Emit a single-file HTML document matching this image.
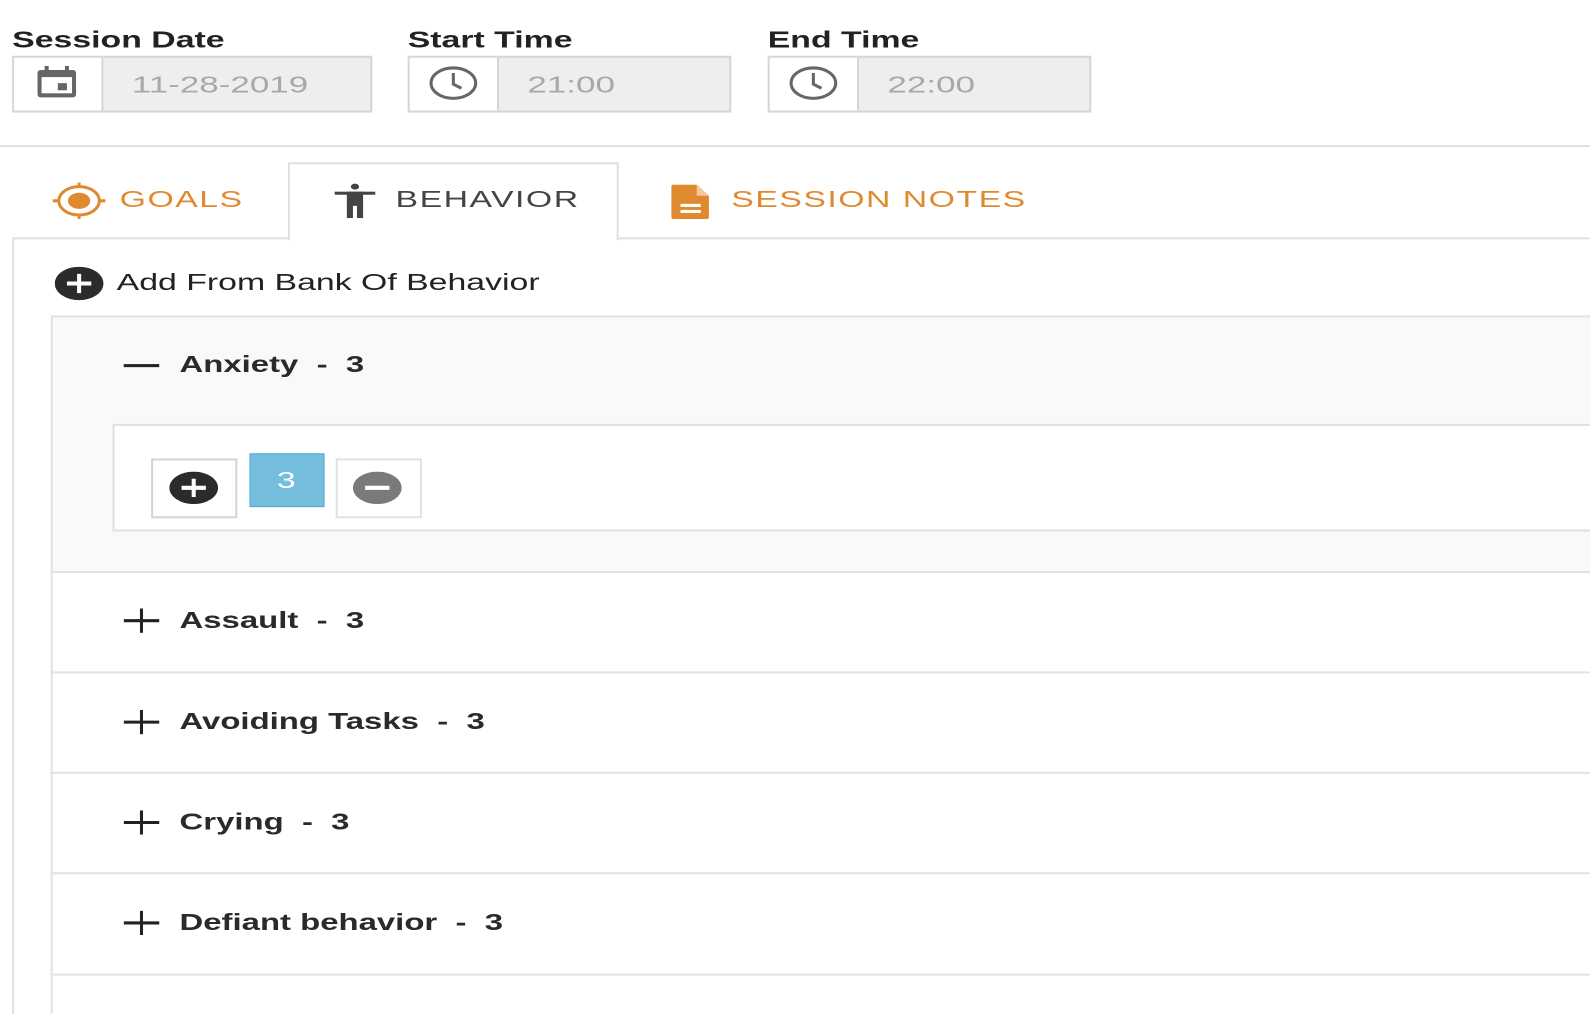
<!DOCTYPE html>
<html><head><meta charset="utf-8"><style>
*{margin:0;padding:0;box-sizing:border-box}
body{width:1590px;height:1000px;overflow:hidden;background:#fff;font-family:"Liberation Sans",Arial,sans-serif;position:relative}
#w{position:absolute;left:0;top:0;width:1568px;height:986px;transform:scale(1.0142);transform-origin:0 0}
.a{position:absolute}
.t{position:absolute;white-space:nowrap;transform:scaleX(1.45);transform-origin:0 50%;line-height:24px;height:24px}
.lbl{font-size:23px;font-weight:bold;color:#222}
.box{position:absolute;border:2px solid #d6d6d6;background:#eee}
.ico{position:absolute;top:0;bottom:0;left:0;background:#fff;border-right:2px solid #d6d6d6}
.val{font-size:23px;color:#a8a8a8;transform:scaleX(1.5)}
.row{position:absolute;left:50px;right:0;border-top:2px solid #e2e2e2}
.name{font-size:23px;font-weight:bold;color:#2a2a2a;transform:scaleX(1.41)}
</style></head><body><div id="w">

<div class="t lbl" style="left:12px;top:27px">Session Date</div>
<div class="box" style="left:12px;top:55px;width:355px;height:56px"><div class="ico" style="width:88px"></div></div>
<svg class="a" style="left:34px;top:64px" width="44" height="34" viewBox="0 0 44 34"><rect x="3" y="5" width="38" height="27" rx="3" fill="#666"/><rect x="7" y="12" width="30" height="16" fill="#fff"/><rect x="10" y="1" width="4" height="7" fill="#666"/><rect x="30" y="1" width="4" height="7" fill="#666"/><rect x="23" y="18" width="9" height="7" fill="#666"/></svg>
<div class="t val" style="left:130px;top:71px">11-28-2019</div>

<div class="t lbl" style="left:402px;top:27px">Start Time</div>
<div class="box" style="left:402px;top:55px;width:319px;height:56px"><div class="ico" style="width:88px"></div></div>
<svg class="a" style="left:422px;top:64px" width="50" height="36" viewBox="0 0 50 36" preserveAspectRatio="none"><ellipse cx="25" cy="18" rx="22" ry="15" fill="none" stroke="#666" stroke-width="3"/><path d="M25 8 V19 L33 23" fill="none" stroke="#666" stroke-width="3"/></svg>
<div class="t val" style="left:520px;top:71px">21:00</div>

<div class="t lbl" style="left:757px;top:27px">End Time</div>
<div class="box" style="left:757px;top:55px;width:319px;height:56px"><div class="ico" style="width:88px"></div></div>
<svg class="a" style="left:777px;top:64px" width="50" height="36" viewBox="0 0 50 36" preserveAspectRatio="none"><ellipse cx="25" cy="18" rx="22" ry="15" fill="none" stroke="#666" stroke-width="3"/><path d="M25 8 V19 L33 23" fill="none" stroke="#666" stroke-width="3"/></svg>
<div class="t val" style="left:875px;top:71px">22:00</div>

<div class="a" style="left:0;right:0;top:143px;height:2px;background:#e0e0e0"></div>

<div class="a" style="left:12px;right:0;top:234px;height:2px;background:#e0e0e0"></div>
<div class="a" style="left:284px;top:160px;width:326px;height:77px;border:2px solid #e0e0e0;border-bottom:none;background:#fff"></div>
<svg class="a" style="left:50px;top:180px" width="56" height="36" viewBox="0 0 56 36" preserveAspectRatio="none"><ellipse cx="28" cy="18" rx="20" ry="14" fill="none" stroke="#e08a30" stroke-width="3"/><ellipse cx="28" cy="18" rx="11" ry="8" fill="#e08a30"/><path d="M28 0V5M28 31V36M2 18H9M47 18H54" stroke="#e08a30" stroke-width="3"/></svg>
<div class="t" style="left:118px;top:184px;font-size:23px;color:#e08a30;letter-spacing:1px">GOALS</div>
<svg class="a" style="left:328px;top:180px" width="44" height="36" viewBox="0 0 44 36" preserveAspectRatio="none"><ellipse cx="22" cy="4" rx="4" ry="3" fill="#444"/><rect x="2" y="9" width="40" height="3" fill="#444"/><rect x="14" y="9" width="16" height="14" fill="#444"/><rect x="14" y="22" width="6" height="13" fill="#444"/><rect x="24" y="22" width="6" height="13" fill="#444"/></svg>
<div class="t" style="left:390px;top:184px;font-size:23px;color:#444;letter-spacing:1px">BEHAVIOR</div>
<svg class="a" style="left:661px;top:182px" width="40" height="34" viewBox="0 0 40 34"><path d="M3 0H26L38 11V32Q38 34 36 34H3Q1 34 1 32V2Q1 0 3 0Z" fill="#e08a30"/><path d="M26 0V11H38" fill="#f5c89a"/><rect x="10" y="19" width="20" height="3" fill="#fff"/><rect x="10" y="25" width="20" height="3" fill="#fff"/></svg>
<div class="t" style="left:721px;top:184px;font-size:23px;color:#e08a30;letter-spacing:1px">SESSION NOTES</div>

<div class="a" style="left:12px;top:235px;width:2px;height:765px;background:#e0e0e0"></div>
<svg class="a" style="left:54px;top:263px" width="48" height="33" viewBox="0 0 48 33" preserveAspectRatio="none"><ellipse cx="24" cy="16.5" rx="24" ry="16.5" fill="#2b2b2b"/><path d="M24 7V26M12 16.5H36" stroke="#fff" stroke-width="4"/></svg>
<div class="t" style="left:115px;top:266px;font-size:23px;color:#222">Add From Bank Of Behavior</div>

<div class="a" style="left:50px;top:311px;right:0;height:253px;background:#f9f9f9;border-top:2px solid #e2e2e2"></div>
<div class="a" style="left:50px;top:311px;width:2px;height:689px;background:#e2e2e2"></div>
<div class="a" style="left:122px;top:359px;width:35px;height:3px;background:#222"></div>
<div class="t name" style="left:177px;top:347px">Anxiety&nbsp;&nbsp;-&nbsp;&nbsp;3</div>
<div class="a" style="left:111px;top:418px;right:0;height:106px;background:#fff;border:2px solid #e0e0e0;border-right:none"></div>
<div class="a" style="left:149px;top:452px;width:85px;height:59px;border:2px solid #d4d4d4;background:#fff"></div>
<svg class="a" style="left:167px;top:465px" width="48" height="32" viewBox="0 0 48 32" preserveAspectRatio="none"><ellipse cx="24" cy="16" rx="24" ry="16" fill="#2b2b2b"/><path d="M24 7V25M12 16H36" stroke="#fff" stroke-width="4"/></svg>
<div class="a" style="left:246px;top:447px;width:74px;height:53px;background:#74bddc;border:1px solid #4fa9d3"></div>
<div class="t" style="left:273px;top:461px;font-size:23px;color:#fff">3</div>
<div class="a" style="left:331px;top:452px;width:85px;height:59px;border:2px solid #e2e2e2;background:#fff"></div>
<svg class="a" style="left:348px;top:465px" width="48" height="32" viewBox="0 0 48 32" preserveAspectRatio="none"><ellipse cx="24" cy="16" rx="24" ry="16" fill="#7a7a7a"/><path d="M12 16H36" stroke="#fff" stroke-width="4"/></svg>

<div class="row" style="top:563px"></div>
<div class="row" style="top:662px"></div>
<div class="row" style="top:761px"></div>
<div class="row" style="top:860px"></div>
<div class="row" style="top:960px"></div>

<svg class="a" style="left:122px;top:600px" width="36" height="24"><path d="M0 12H35M17.5 0V24" stroke="#222" stroke-width="3"/></svg>
<div class="t name" style="left:177px;top:599px">Assault&nbsp;&nbsp;-&nbsp;&nbsp;3</div>
<svg class="a" style="left:122px;top:700px" width="36" height="24"><path d="M0 12H35M17.5 0V24" stroke="#222" stroke-width="3"/></svg>
<div class="t name" style="left:177px;top:699px">Avoiding Tasks&nbsp;&nbsp;-&nbsp;&nbsp;3</div>
<svg class="a" style="left:122px;top:799px" width="36" height="24"><path d="M0 12H35M17.5 0V24" stroke="#222" stroke-width="3"/></svg>
<div class="t name" style="left:177px;top:798px">Crying&nbsp;&nbsp;-&nbsp;&nbsp;3</div>
<svg class="a" style="left:122px;top:898px" width="36" height="24"><path d="M0 12H35M17.5 0V24" stroke="#222" stroke-width="3"/></svg>
<div class="t name" style="left:177px;top:897px">Defiant behavior&nbsp;&nbsp;-&nbsp;&nbsp;3</div>
</div></body></html>
